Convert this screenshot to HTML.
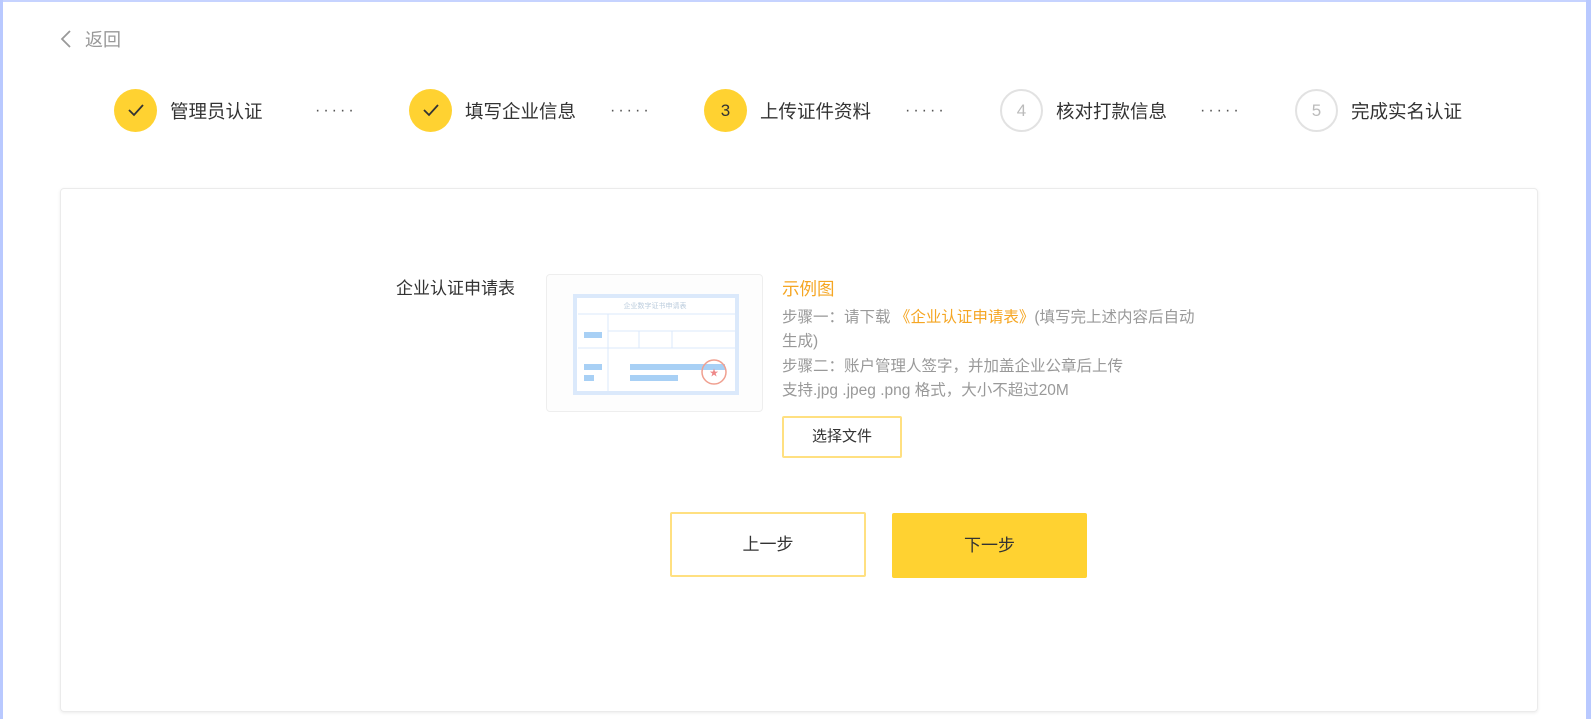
<!DOCTYPE html>
<html><head><meta charset="utf-8"><style>
*{margin:0;padding:0;box-sizing:border-box}
body{width:1591px;height:719px;background:#fff;font-family:"Liberation Sans","Noto Sans CJK SC",sans-serif;position:relative;overflow:hidden;color:#333}
.bl{position:absolute;left:0;top:0;width:3px;height:719px;background:#b9c9ff}
.br{position:absolute;right:0;top:0;width:5px;height:719px;background:#b9c9ff}
.bt{position:absolute;left:0;top:0;width:1591px;height:2px;background:#c6d3ff}
.abs{position:absolute}
.back{left:59px;top:26px;font-size:18px;color:#999}
.c{position:absolute;top:89px;width:43px;height:43px;border-radius:50%;background:#ffd231;text-align:center;line-height:43px;font-size:17px;color:#333}
.c.g{background:#fff;border:2px solid #e2e2e2;color:#bbb;line-height:39px}
.lbl{position:absolute;top:98px;font-size:18.5px;color:#333}
.dots{position:absolute;top:101px;font-size:16px;color:#555;letter-spacing:3px;line-height:20px}
.card{left:60px;top:188px;width:1478px;height:524px;border:1px solid #ebebeb;border-radius:4px;box-shadow:0 1px 3px rgba(0,0,0,.08)}
.t{font-size:15.5px;color:#999;line-height:24.4px}
.btn{position:absolute;text-align:center;font-size:17px;border-radius:2px}
</style></head><body>
<div class="bt"></div><div class="bl"></div><div class="br"></div>
<div class="abs back"><svg width="14" height="20" style="vertical-align:-3px;margin-right:12px"><path d="M11 2 L3 10 L11 18" stroke="#999" stroke-width="1.8" fill="none"/></svg>返回</div>

<div class="c" style="left:114px"><svg width="18" height="14" style="vertical-align:-1px"><path d="M2 7 L7 12 L16 2" stroke="#333" stroke-width="1.8" fill="none"/></svg></div>
<div class="lbl" style="left:170px">管理员认证</div>
<div class="dots" style="left:315px">·····</div>
<div class="c" style="left:409px"><svg width="18" height="14" style="vertical-align:-1px"><path d="M2 7 L7 12 L16 2" stroke="#333" stroke-width="1.8" fill="none"/></svg></div>
<div class="lbl" style="left:465px">填写企业信息</div>
<div class="dots" style="left:610px">·····</div>
<div class="c" style="left:704px">3</div>
<div class="lbl" style="left:760px">上传证件资料</div>
<div class="dots" style="left:905px">·····</div>
<div class="c g" style="left:1000px">4</div>
<div class="lbl" style="left:1056px">核对打款信息</div>
<div class="dots" style="left:1200px">·····</div>
<div class="c g" style="left:1295px">5</div>
<div class="lbl" style="left:1351px">完成实名认证</div>

<div class="abs card"></div>
<div class="abs" style="left:396px;top:274px;font-size:17px;color:#333">企业认证申请表</div>
<div class="abs" style="left:546px;top:274px;width:217px;height:138px;border:1px solid #eee;border-radius:4px;background:#fdfdfd">
<svg width="217" height="138" style="position:absolute;left:0;top:0">
<rect x="28" y="21" width="162" height="97" fill="#fff" stroke="#dbe9fb" stroke-width="4"/>
<line x1="31" y1="39" x2="188" y2="39" stroke="#dbe9fb"/>
<line x1="31" y1="73" x2="188" y2="73" stroke="#dbe9fb"/>
<line x1="61" y1="39" x2="61" y2="116" stroke="#dbe9fb"/>
<line x1="92" y1="56" x2="92" y2="73" stroke="#dbe9fb"/>
<line x1="125" y1="56" x2="125" y2="73" stroke="#dbe9fb"/>
<line x1="61" y1="56" x2="188" y2="56" stroke="#dbe9fb"/>
<text x="108" y="33" font-size="7" fill="#bcd" text-anchor="middle">企业数字证书申请表</text>
<rect x="37" y="57" width="18" height="6" fill="#a8d0f5"/>
<rect x="37" y="89" width="18" height="6" fill="#a8d0f5"/>
<rect x="37" y="100" width="10" height="6" fill="#a8d0f5"/>
<rect x="83" y="89" width="95" height="6" fill="#a8d0f5"/>
<rect x="83" y="100" width="48" height="6" fill="#a8d0f5"/>
<circle cx="167" cy="97" r="12" fill="none" stroke="#f0a090" stroke-width="1.5"/>
<text x="167" y="101" font-size="9" fill="#e88" text-anchor="middle">★</text>
</svg></div>
<div class="abs" style="left:782px;top:276px;font-size:17.5px;color:#f5a623">示例图</div>
<div class="abs t" style="left:782px;top:306px;width:450px">步骤一：请下载 <span style="color:#f5a623">《企业认证申请表》</span>(填写完上述内容后自动<br>生成)<br>步骤二：账户管理人签字，并加盖企业公章后上传<br>支持.jpg .jpeg .png 格式，大小不超过20M</div>
<div class="btn" style="left:782px;top:416px;width:120px;height:42px;border:2px solid #ffe081;line-height:38px;font-size:15px;color:#333">选择文件</div>
<div class="btn" style="left:670px;top:512px;width:196px;height:65px;border:2px solid #ffe081;line-height:61px">上一步</div>
<div class="btn" style="left:892px;top:513px;width:195px;height:65px;background:#ffd231;line-height:65px">下一步</div>
</body></html>
